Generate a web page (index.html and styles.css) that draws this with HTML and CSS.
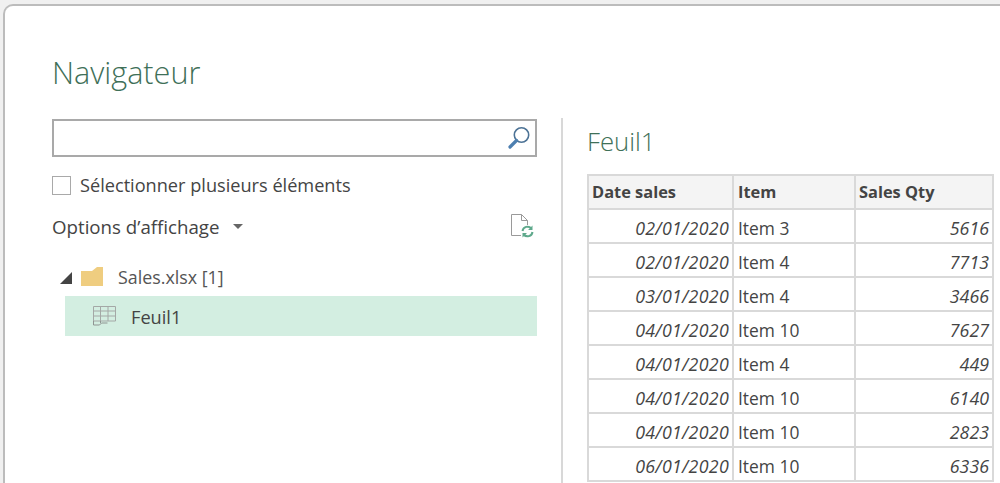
FILE: index.html
```html
<!DOCTYPE html>
<html lang="fr">
<head>
<meta charset="utf-8">
<title>Navigateur</title>
<link rel="stylesheet" href="styles.css">
</head>
<body>
<div class="window">
  <div class="left">
    <h1 class="title">Navigateur</h1>
    <div class="search">
      <svg class="search-icon" width="26" height="26" viewBox="0 0 26 26"><circle cx="15.5" cy="10" r="7.2" fill="none" stroke="#4d7396" stroke-width="1.6"/><path d="M10.5 15.5 4 22" stroke="#4d7fb0" stroke-width="3.2" stroke-linecap="round"/></svg>
    </div>
    <label class="multi"><span class="checkbox"></span>Sélectionner plusieurs éléments</label>
    <div class="options">
      <span class="options-label">Options d’affichage</span>
      <span class="caret"></span>
      <svg class="refresh" width="26" height="28" viewBox="0 0 26 28"><path d="M12 23.5H2.500V2.500H12.500L18.500 8.500V13M12.500 2.500V8.500H18.500" fill="none" stroke="#9a9a9a" stroke-width="1"/><path d="M13.500 19a5 5 0 0 1 8.800-2.500M23.500 20a5 5 0 0 1-8.800 2.500" fill="none" stroke="#5fa98c" stroke-width="2"/><path d="M23.500 13.500v4.500h-4.500zM13.500 25.500v-4.500h4.500z" fill="#5fa98c"/></svg>
    </div>
    <div class="tree-file">
      <span class="expander"></span>
      <svg class="folder" width="24" height="21" viewBox="0 0 24 21"><path d="M1 5h11l5-4h6v19H1z" fill="#efcd80"/></svg>
      <span>Sales.xlsx [1]</span>
    </div>
    <div class="tree-sheet">
      <svg class="sheet-icon" width="25" height="22" viewBox="0 0 25 22"><path d="M1.500 1.500h22v14.500h-22zM1.500 6h22M1.500 11h22M8.500 1.500v14.500M16 1.500v14.500" fill="none" stroke="#a4a8a6" stroke-width="1"/><path d="M1.500 16v4h6l2-2h6M8.500 16v2" fill="none" stroke="#8f9492" stroke-width="1"/></svg>
      <span class="sheet-label">Feuil1</span>
    </div>
  </div>
  <div class="right">
    <h2 class="sheet-title">Feuil1</h2>
    <table class="data">
      <thead><tr><th class="c1">Date sales</th><th class="c2">Item</th><th class="c3">Sales Qty</th></tr></thead>
      <tbody>
        <tr><td class="date">02/01/2020</td><td class="item">Item 3</td><td class="num">5616</td></tr>
        <tr><td class="date">02/01/2020</td><td class="item">Item 4</td><td class="num">7713</td></tr>
        <tr><td class="date">03/01/2020</td><td class="item">Item 4</td><td class="num">3466</td></tr>
        <tr><td class="date">04/01/2020</td><td class="item">Item 10</td><td class="num">7627</td></tr>
        <tr><td class="date">04/01/2020</td><td class="item">Item 4</td><td class="num">449</td></tr>
        <tr><td class="date">04/01/2020</td><td class="item">Item 10</td><td class="num">6140</td></tr>
        <tr><td class="date">04/01/2020</td><td class="item">Item 10</td><td class="num">2823</td></tr>
        <tr><td class="date">06/01/2020</td><td class="item">Item 10</td><td class="num">6336</td></tr>
      </tbody>
    </table>
  </div>
</div>
</body>
</html>
```
FILE: styles.css
```css
html, body {
  margin: 0;
  height: 100%;
  overflow: hidden;
}
body {
  background: #f0f0f0;
  padding: 4px 0 0 3px;
  box-sizing: border-box;
  font-family: "Open Sans", "Noto Sans", sans-serif;
  color: #444;
}
.window {
  display: flex;
  box-sizing: border-box;
  height: 479px;
  overflow: hidden;
  background: #fff;
  border: solid #bcbcbc;
  border-width: 2px 0 0 2px;
  border-top-left-radius: 10px;
}
.left {
  width: 556px;
  box-sizing: border-box;
  padding: 45px 0 0 47px;
  flex: none;
}
.title {
  margin: 0;
  font-size: 30.600px;
  line-height: 42px;
  font-weight: 300;
  color: #3f7058;
}
.search {
  display: flex;
  justify-content: flex-end;
  align-items: center;
  box-sizing: border-box;
  width: 485px;
  height: 38px;
  margin-top: 26px;
  padding-right: 3px;
  border: 2px solid #a9a9a9;
}
.multi {
  display: flex;
  align-items: center;
  gap: 9px;
  height: 20px;
  margin-top: 18px;
  font-size: 18.170px;
}
.checkbox {
  box-sizing: border-box;
  width: 19px;
  height: 19px;
  border: 1.500px solid #a9a9a9;
}
.options {
  display: flex;
  align-items: center;
  width: 483px;
  height: 28px;
  margin-top: 17px;
  font-size: 18.700px;
}
.caret {
  margin-left: 13px;
  border: 5px solid transparent;
  border-top-color: #666;
  border-bottom-width: 0;
}
.refresh {
  margin-left: auto;
}
.tree-file {
  display: flex;
  align-items: center;
  height: 37px;
  margin-top: 18px;
  margin-bottom: 1px;
  font-size: 17.850px;
  color: #555;
}
.expander {
  width: 0;
  height: 0;
  margin: 2px 8px 0 8px;
  border-style: solid;
  border-width: 0 0 12px 12px;
  border-color: transparent transparent #444 transparent;
}
.folder {
  margin-right: 14px;
}
.tree-sheet {
  display: flex;
  align-items: center;
  width: 472px;
  height: 40px;
  margin-left: 13px;
  padding-left: 27px;
  box-sizing: border-box;
  background: #d3eee1;
  font-size: 18.200px;
}
.sheet-icon {
  margin-right: 14px;
}
.sheet-label {
  padding-top: 2px;
}
.right {
  flex: 1;
  min-width: 0;
  padding: 0 0 0 24px;
  margin-top: 112px;
  border-left: 2px solid #d8d8d8;
}
.sheet-title {
  margin: 6px 0 0;
  font-size: 25.700px;
  line-height: 36px;
  font-weight: 300;
  color: #3f7058;
}
.data {
  margin-top: 14px;
  border-collapse: collapse;
  table-layout: fixed;
  width: 407px;
  font-size: 17.400px;
}
.data th, .data td {
  box-sizing: border-box;
  border: 2px solid #d9d9d9;
  padding: 3px 3px 0;
  height: 34px;
  white-space: nowrap;
  color: #444;
}
.data th {
  padding: 0 3px 2px;
  background: #f4f4f4;
  text-align: left;
  font-size: 16.400px;
  font-weight: 700;
}
.data .c2, .data .item {
  padding-left: 4px;
}
.c1 { width: 145px; }
.c2 { width: 122px; }
.data .date, .data .num {
  text-align: right;
  font-style: italic;
  font-size: 17.800px;
}
.data .date {
  letter-spacing: 0.300px;
}
```
